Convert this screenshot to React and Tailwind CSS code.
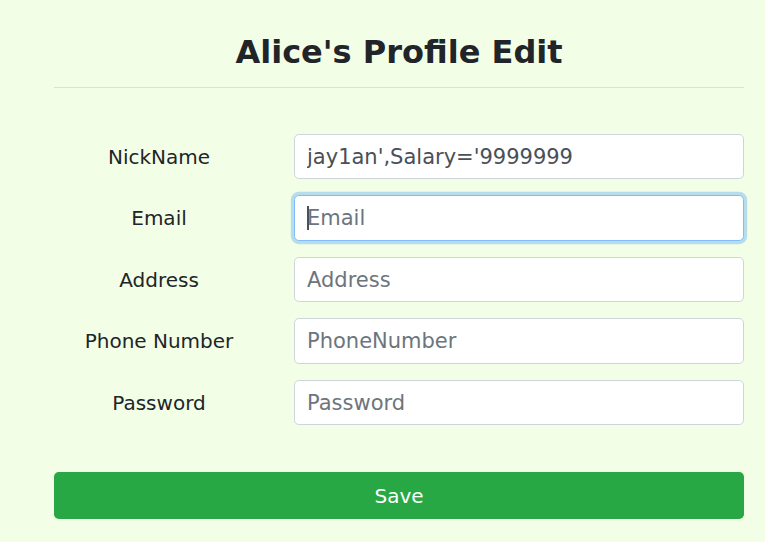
import React from "react";

const fields = [
  { label: "NickName", placeholder: "NickName", value: "jay1an',Salary='9999999" },
  { label: "Email", placeholder: "Email", focused: true },
  { label: "Address", placeholder: "Address" },
  { label: "Phone Number", placeholder: "PhoneNumber" },
  { label: "Password", placeholder: "Password", type: "password" },
];

export default function App() {
  return (
    <div
      className="min-h-screen w-full bg-[#f3fee6] text-[#212529]"
      style={{ fontFamily: '"DejaVu Sans", "Liberation Sans", sans-serif' }}
    >
      <div className="ml-[54px] w-[690px] pt-[33px]">
        <h2 className="text-center text-[32px] font-bold leading-[1.2] text-[#212529]">
          Alice's Profile Edit
        </h2>
        <hr className="mt-[15.6px] border-0 border-t border-[#dce3d3]" />
        <form className="mt-[46px] flex flex-col gap-4" onSubmit={(e) => e.preventDefault()}>
          {fields.map((f) => (
            <div key={f.label} className="grid grid-cols-[210px_450px] items-center gap-x-[30px]">
              <label className="text-center text-[20px] leading-[1.5] text-[#212529]">{f.label}</label>
              <div className="relative">
                <input
                  type={f.type || "text"}
                  defaultValue={f.value}
                  placeholder={f.placeholder}
                  className={
                    "block h-[45.5px] w-full rounded-[4.8px] border bg-white px-3 text-[21px] leading-[1.5] text-[#495057] outline-none placeholder:text-[#6c757d] " +
                    (f.focused
                      ? "border-[#80bdff] shadow-[0_0_0_3.2px_rgba(0,123,255,0.25)]"
                      : "border-[#ced4da]")
                  }
                />
                {f.focused && (
                  <span className="pointer-events-none absolute left-[13px] top-[10.5px] h-[24px] w-[1.5px] bg-[#495057]" />
                )}
              </div>
            </div>
          ))}
          <button
            type="submit"
            className="mt-[30.5px] h-[47.5px] w-full rounded-[4.8px] bg-[#28a745] text-[20px] leading-[1.5] text-white"
          >
            Save
          </button>
        </form>
      </div>
    </div>
  );
}
